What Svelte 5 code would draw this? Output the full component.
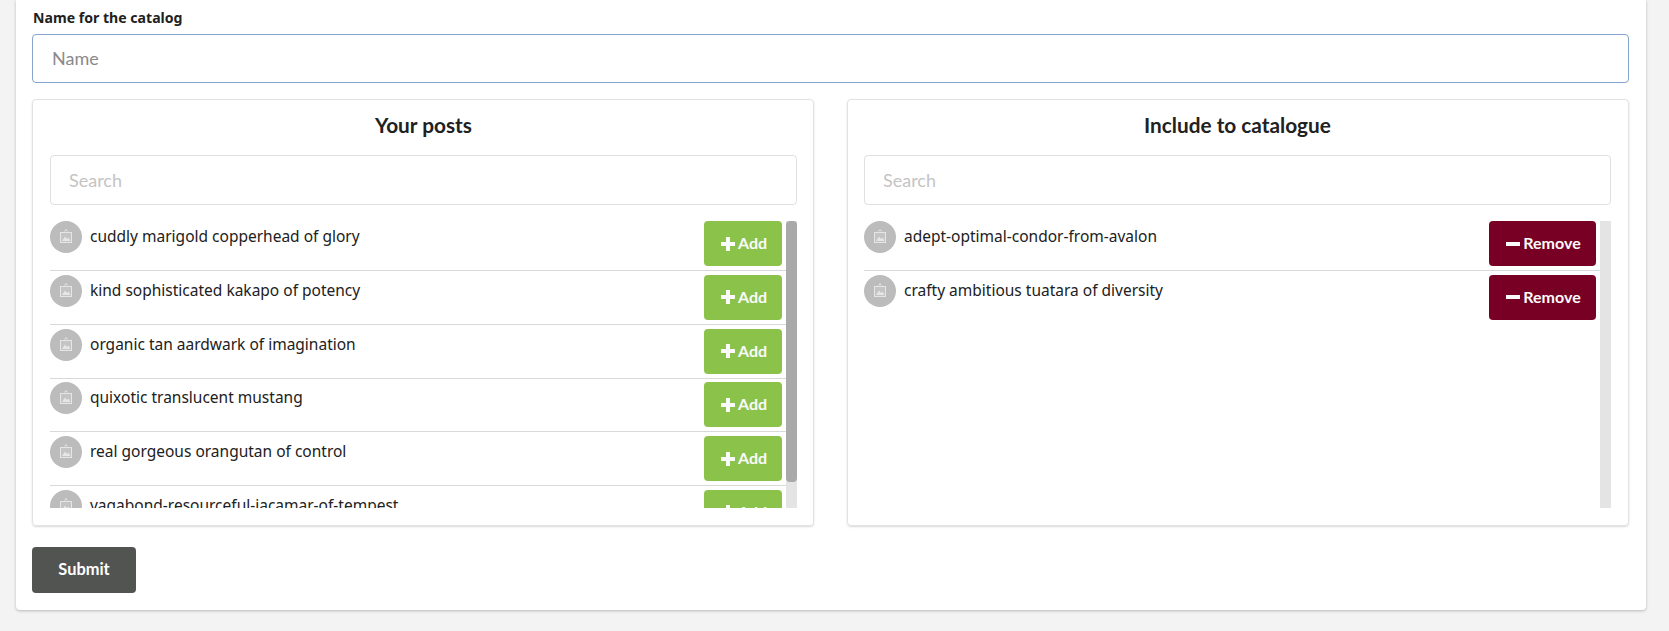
<script lang="ts">
  const posts = [
    'cuddly marigold copperhead of glory',
    'kind sophisticated kakapo of potency',
    'organic tan aardwark of imagination',
    'quixotic translucent mustang',
    'real gorgeous orangutan of control',
    'vagabond-resourceful-jacamar-of-tempest'
  ];
  const included = ['adept-optimal-condor-from-avalon', 'crafty ambitious tuatara of diversity'];
</script>

{#snippet thumb()}
  <span class="thumb">
    <svg width="14" height="18" viewBox="0 0 14 18" fill="none" stroke="#e6e6e6" stroke-width="1">
      <path d="M5.500 3.500 7 1.500l1.500 2" />
      <rect x="1.500" y="4.500" width="11" height="10" fill="rgba(255,255,255,0.12)" />
      <path d="M3 13l3-4.500 2 2.500 1.500-1.500L11.500 13z" fill="#e6e6e6" stroke="none" />
    </svg>
  </span>
{/snippet}

<div class="page">
  <div class="card">
    <label class="name-label" for="name">Name for the catalog</label>
    <input id="name" class="name-input" type="text" placeholder="Name" />

    <div class="columns">
      <section class="panel">
        <h2>Your posts</h2>
        <input class="search" type="text" placeholder="Search" />
        <div class="scroller">
          <div class="list">
            {#each posts as post}
              <div class="row">
                {@render thumb()}
                <span class="title">{post}</span>
                <button class="btn add">
                  <svg width="14" height="14" viewBox="0 0 14 14"><path d="M5 0h4v5h5v4H9v5H5V9H0V5h5z" fill="currentColor" /></svg>
                  <span class="btn-label">Add</span>
                </button>
              </div>
            {/each}
          </div>
          <div class="track"><div class="track-thumb"></div></div>
        </div>
      </section>

      <section class="panel right">
        <h2>Include to catalogue</h2>
        <input class="search" type="text" placeholder="Search" />
        <div class="scroller">
          <div class="list">
            {#each included as post}
              <div class="row">
                {@render thumb()}
                <span class="title">{post}</span>
                <button class="btn remove">
                  <svg width="14" height="14" viewBox="0 0 14 14"><path d="M0 5h14v4H0z" fill="currentColor" /></svg>
                  <span class="btn-label">Remove</span>
                </button>
              </div>
            {/each}
          </div>
          <div class="track"></div>
        </div>
      </section>
    </div>

    <button class="submit">Submit</button>
  </div>
</div>

<style>
  :global(body) {
    background: #f3f3f3;
    font-family: "Noto Sans", sans-serif;
    color: #212121;
  }

  .page {
    padding: 0 23px 21px 16px;
  }

  .card {
    background: #fff;
    border-radius: 0 0 4px 4px;
    box-shadow: 0 1px 3px rgba(0, 0, 0, 0.25);
    padding: 10px 17px 16px 16px;
    height: 610px;
    box-sizing: border-box;
  }

  .name-label {
    display: block;
    font-size: 14.100px;
    font-weight: 700;
    line-height: 16px;
    margin-bottom: 8px;
    margin-left: 1px;
  }

  .name-input {
    display: block;
    width: 100%;
    height: 49px;
    box-sizing: border-box;
    border: 1px solid #85a5cf;
    border-radius: 4px;
    padding: 0 19px 1px;
    font: 18px Lato, sans-serif;
    outline: none;
  }

  .name-input::placeholder {
    color: #8a8a8a;
  }

  .columns {
    display: grid;
    grid-template-columns: 782px 782px;
    justify-content: space-between;
    margin-top: 16px;
  }

  .panel {
    height: 427px;
    box-sizing: border-box;
    border: 1px solid #e2e2e2;
    border-radius: 4px;
    box-shadow: 0 1px 2px rgba(0, 0, 0, 0.15);
    padding: 0 16px 0 17px;
  }

  .panel.right {
    padding: 0 17px 0 16px;
  }

  h2 {
    margin: 0;
    height: 55px;
    font: 700 20.800px/50px Lato, sans-serif;
    text-align: center;
    color: #212121;
  }

  .search {
    display: block;
    width: 100%;
    height: 50px;
    box-sizing: border-box;
    border: 1px solid #e0e0e0;
    border-radius: 4px;
    padding: 0 18px;
    font: 18px Lato, sans-serif;
    outline: none;
  }

  .search::placeholder {
    color: #c4c4c4;
  }

  .scroller {
    display: flex;
    height: 287px;
    margin-top: 16px;
  }

  .list {
    flex: 1;
    min-width: 0;
    overflow: hidden;
  }

  .track {
    flex: none;
    width: 11px;
    background: #e4e4e4;
  }

  .track-thumb {
    height: 261px;
    background: #a9a9a9;
    border-radius: 4px;
  }

  .row {
    display: flex;
    align-items: flex-start;
    height: 50px;
    margin-bottom: 3.750px;
    box-sizing: border-box;
    border-bottom: 1px solid #d9d9d9;
  }

  .row:last-child {
    border-bottom: none;
  }

  .thumb {
    flex: none;
    display: flex;
    align-items: center;
    justify-content: center;
    width: 32px;
    height: 32px;
    border-radius: 50%;
    background: #bcbcbc;
  }

  .title {
    flex: 1;
    margin-left: 8px;
    font-size: 15.500px;
    line-height: 30px;
  }

  .btn {
    flex: none;
    display: flex;
    align-items: center;
    justify-content: center;
    gap: 3px;
    height: 45px;
    margin-right: 4px;
    border: none;
    border-radius: 4px;
    color: #fafafa;
    font: 700 16px Lato, sans-serif;
    padding: 0 0 0 2px;
  }

  .btn-label {
    margin-top: -2px;
  }

  .add {
    width: 78px;
    background: #8bc34a;
  }

  .remove {
    width: 107px;
    background: #780024;
  }

  .submit {
    display: block;
    margin-top: 21px;
    width: 104px;
    height: 46px;
    border: none;
    border-radius: 4px;
    padding: 0 0 3px;
    background: #525451;
    color: #fff;
    font: 700 16.400px Lato, sans-serif;
  }
</style>
